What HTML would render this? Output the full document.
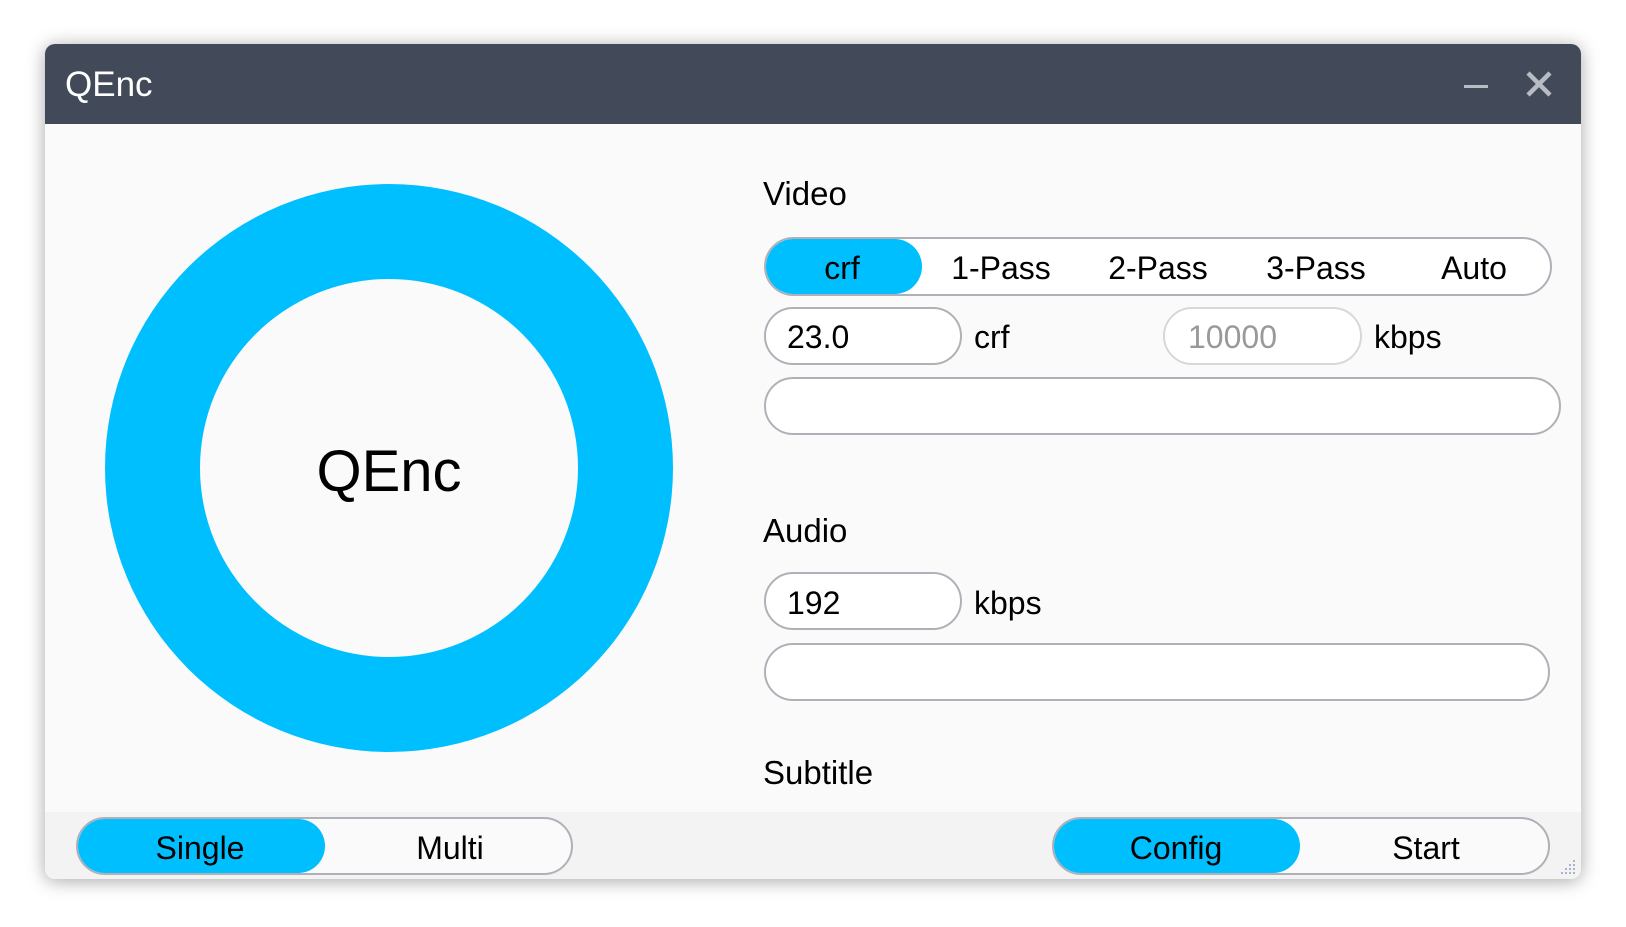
<!DOCTYPE html>
<html><head><meta charset="utf-8"><style>
*{box-sizing:border-box;margin:0;padding:0}
body{width:1626px;height:927px;background:#fff;font-family:"Segoe UI","Liberation Sans",sans-serif;position:relative;overflow:hidden;color:#000}
.win{position:absolute;left:45px;top:44px;width:1536px;height:835px;background:#fafafa;border-radius:10px;overflow:hidden;box-shadow:0 2px 18px rgba(0,0,0,.35)}
.title{position:absolute;left:0;top:0;width:100%;height:80px;background:#424a59}
.title span{position:absolute;left:20px;top:21px;font-size:35px;color:#fff}
.a{position:absolute}
.t{position:absolute;font-size:32px;line-height:1;white-space:nowrap}
.box{position:absolute;border:2px solid #b0b0b8;border-radius:30px;background:#fff}
.pill{position:absolute;background:#00bfff;border-radius:28px}
.c{transform:translate(-50%,-50%)}
</style></head><body>
<div class="win">
<div class="title"><span>QEnc</span>
<div class="a" style="left:1419px;top:41px;width:24px;height:3px;background:#b8bcc4"></div>
<svg class="a" style="left:1480px;top:26px" width="28" height="28" viewBox="0 0 28 28"><path d="M3 3L25 25M25 3L3 25" stroke="#b8bcc4" stroke-width="4.5"/></svg>
</div>
<div class="a" style="left:0;top:768px;width:100%;height:67px;background:#f3f3f3"></div>
<svg class="a" style="left:1514px;top:814px" width="18" height="18" viewBox="0 0 18 18" fill="#a8b4cc"><rect x="14" y="2" width="2" height="2"/><rect x="10" y="6" width="2" height="2"/><rect x="14" y="6" width="2" height="2"/><rect x="6" y="10" width="2" height="2"/><rect x="10" y="10" width="2" height="2"/><rect x="14" y="10" width="2" height="2"/><rect x="2" y="14" width="2" height="2"/><rect x="6" y="14" width="2" height="2"/><rect x="10" y="14" width="2" height="2"/><rect x="14" y="14" width="2" height="2"/></svg>
</div>
<div class="a" style="left:105px;top:184px;width:568px;height:568px;border-radius:50%;background:#00bfff"></div>
<div class="a" style="left:200px;top:279px;width:378px;height:378px;border-radius:50%;background:#fafafa"></div>
<div class="t c" style="left:389px;top:472px;font-size:58px">QEnc</div>

<div class="t" style="left:763px;top:177px;font-size:33px">Video</div>
<div class="box" style="left:764px;top:237px;width:788px;height:59px"></div>
<div class="pill" style="left:766px;top:239px;width:156px;height:55px"></div>
<div class="t c" style="left:842px;top:268px">crf</div>
<div class="t c" style="left:1001px;top:268px">1-Pass</div>
<div class="t c" style="left:1158px;top:268px">2-Pass</div>
<div class="t c" style="left:1316px;top:268px">3-Pass</div>
<div class="t c" style="left:1474px;top:268px">Auto</div>

<div class="box" style="left:764px;top:307px;width:198px;height:58px"></div>
<div class="t" style="left:787px;top:321px">23.0</div>
<div class="t" style="left:974px;top:321px">crf</div>
<div class="box" style="left:1163px;top:307px;width:199px;height:58px;border-color:#d8d8dc"></div>
<div class="t" style="left:1188px;top:321px;color:#999">10000</div>
<div class="t" style="left:1374px;top:321px">kbps</div>
<div class="box" style="left:764px;top:377px;width:797px;height:58px"></div>

<div class="t" style="left:763px;top:514px;font-size:33px">Audio</div>
<div class="box" style="left:764px;top:572px;width:198px;height:58px"></div>
<div class="t" style="left:787px;top:587px">192</div>
<div class="t" style="left:974px;top:587px">kbps</div>
<div class="box" style="left:764px;top:643px;width:786px;height:58px"></div>

<div class="t" style="left:763px;top:756px;font-size:33px">Subtitle</div>

<div class="box" style="left:76px;top:817px;width:497px;height:58px;background:#fafafa"></div>
<div class="pill" style="left:78px;top:819px;width:247px;height:54px"></div>
<div class="t c" style="left:200px;top:848px">Single</div>
<div class="t c" style="left:450px;top:848px">Multi</div>
<div class="box" style="left:1052px;top:817px;width:498px;height:58px;background:#fafafa"></div>
<div class="pill" style="left:1054px;top:819px;width:246px;height:54px"></div>
<div class="t c" style="left:1176px;top:848px">Config</div>
<div class="t c" style="left:1426px;top:848px">Start</div>
</body></html>
